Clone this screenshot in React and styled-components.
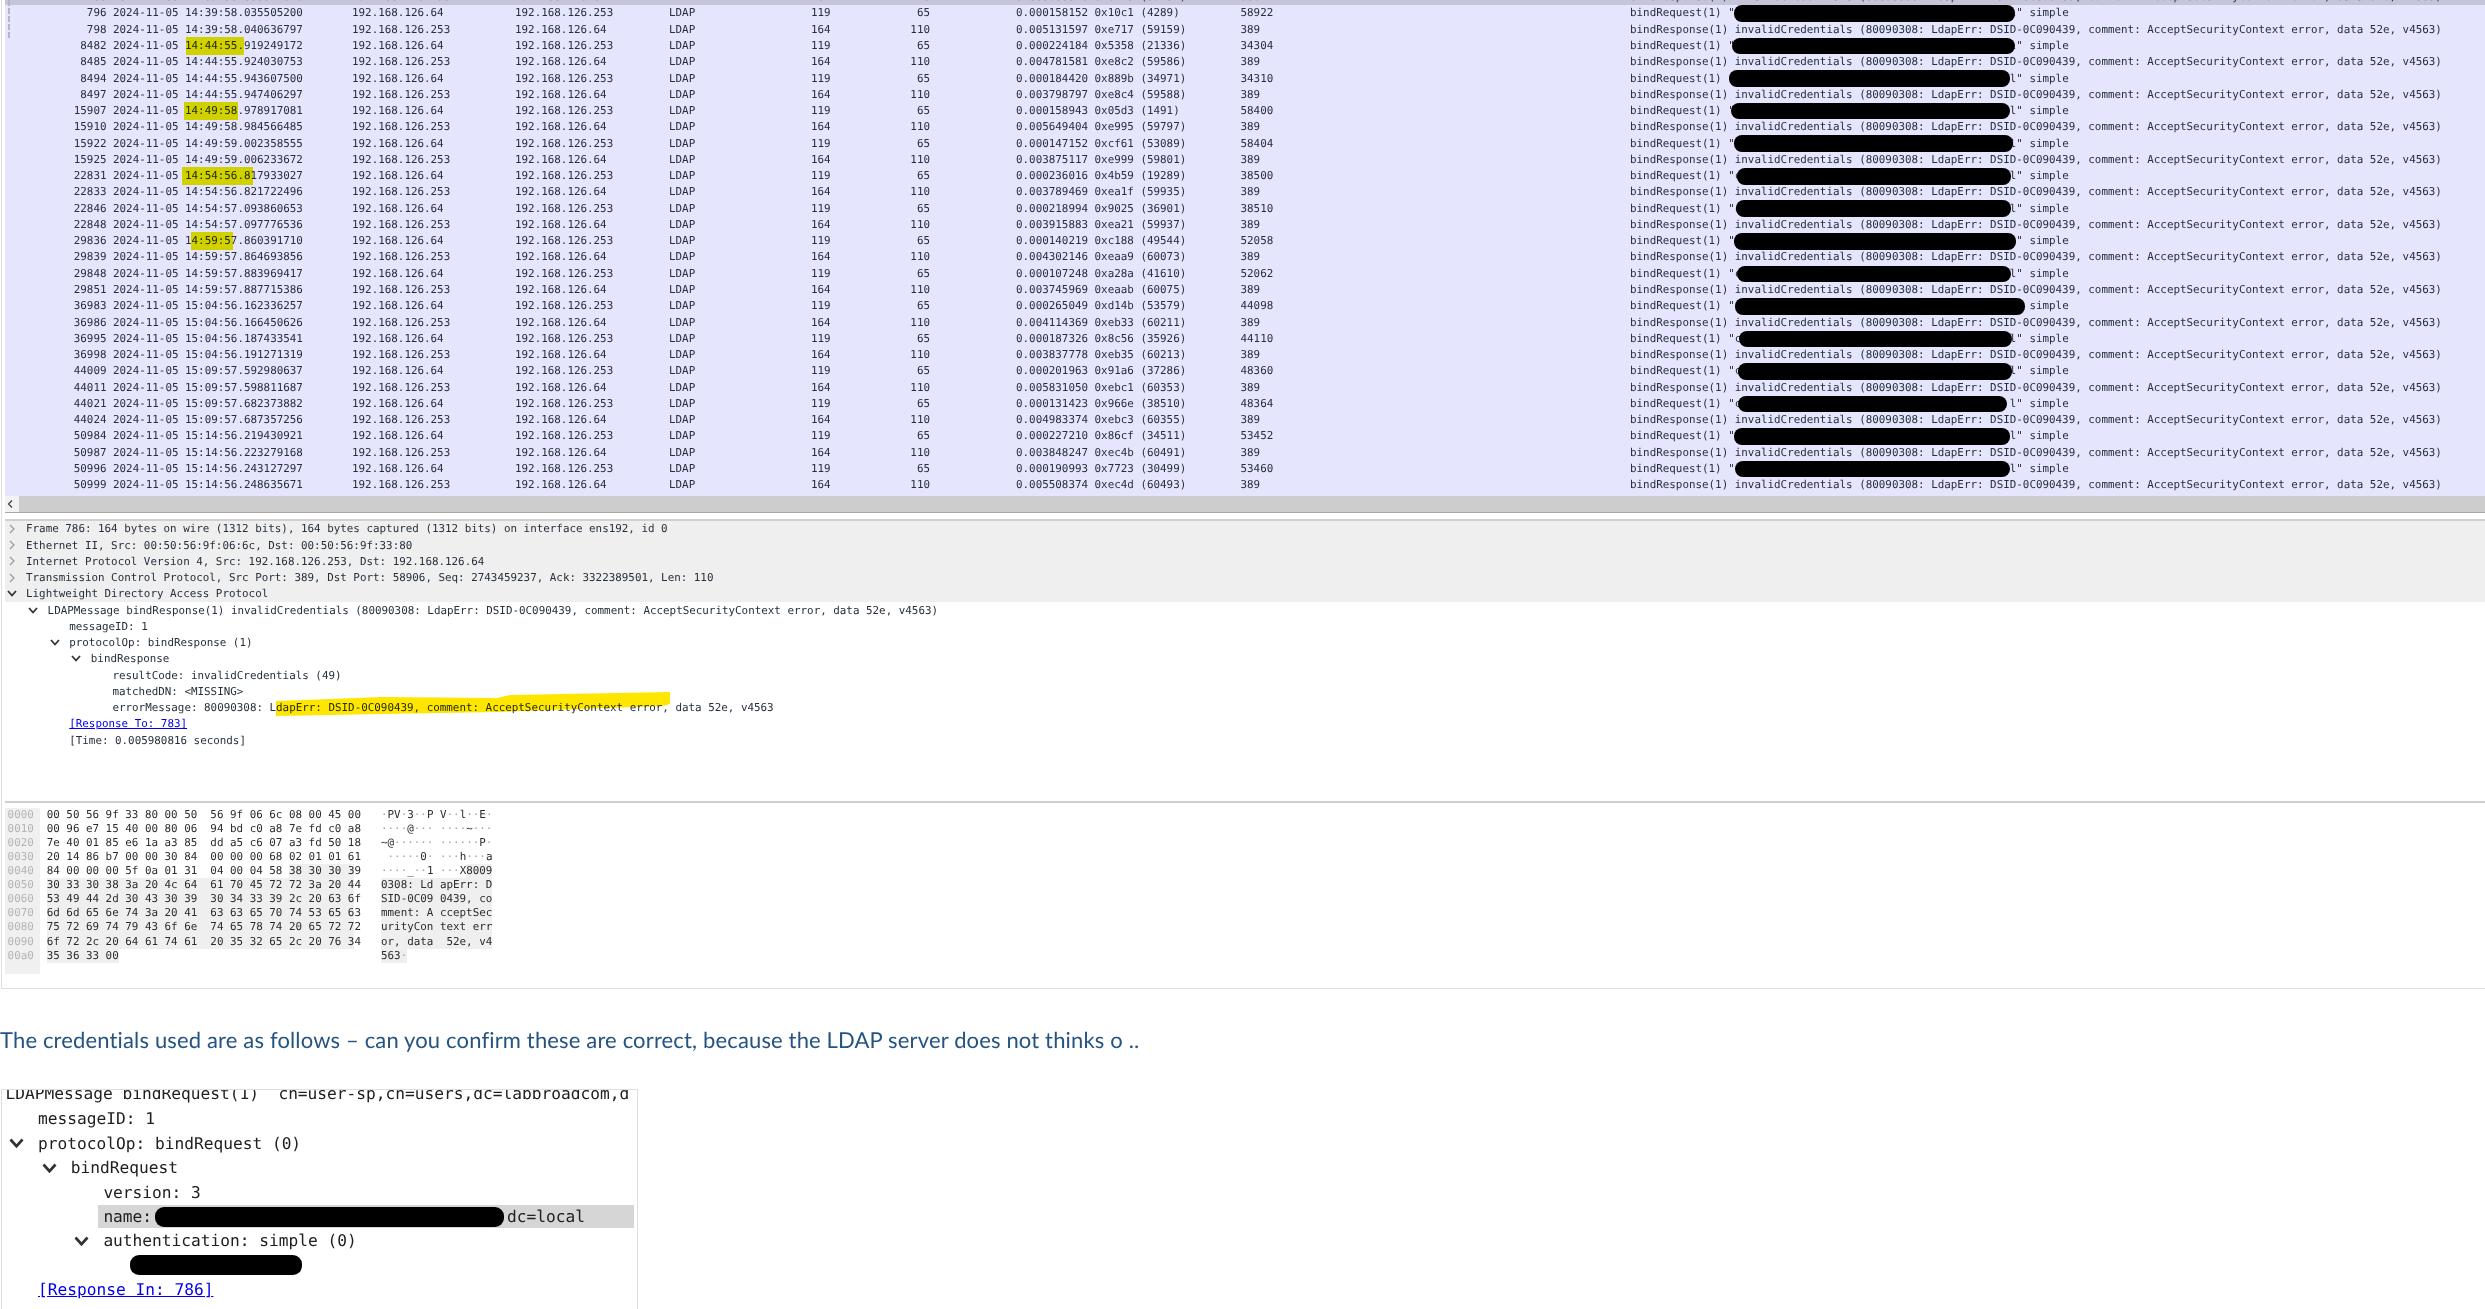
import React from "react";
import styled, { createGlobalStyle } from "styled-components";

const Global = createGlobalStyle`
  html, body { margin: 0; padding: 0; background: #fff; overflow: hidden; }
  * { box-sizing: border-box; }
`;

const ROW = 16.28;

const Page = styled.div`
  width: 2485px;
  height: 1309px;
  overflow: hidden;
  display: flex;
  flex-direction: column;
  font-family: "DejaVu Sans Mono", "Liberation Mono", monospace;
  font-size: 10.88px;
  text-rendering: geometricPrecision;
  color: #26303c;
`;
const Capture = styled.div`
  margin-left: 1px;
  padding-left: 3px;
  border-left: 1px solid #dedede;
  border-bottom: 1px solid #dedede;
  height: 989px;
  display: flex;
  flex-direction: column;
  flex: none;
`;
const PacketList = styled.div`
  position: relative;
  height: 496px;
  flex: none;
  overflow: hidden;
  background: #e5e5fd;
`;
const FlowLine = styled.div`
  position: absolute;
  left: 3px;
  top: 0;
  height: 40px;
  width: 2px;
  background: repeating-linear-gradient(#b4b4c8 0 6px, transparent 6px 8px);
`;
const PacketRow = styled.div`
  display: grid;
  grid-template-columns: 108px 239px 163px 154px 142px 39px 80px 86px 224.5px 389.5px 1fr;
  height: ${ROW}px;
  line-height: ${ROW}px;
  white-space: pre;
  background: ${(p) => (p.$selected ? "#c5c4d9" : "transparent")};
  margin-top: ${(p) => (p.$selected ? "-10.8px" : "0")};
`;
const Cell = styled.div`
  position: relative;
  text-align: ${(p) => (p.$right ? "right" : "left")};
  padding-right: ${(p) => (p.$pad ? p.$pad : 0)}px;
`;
const TimeMark = styled.i`
  position: absolute;
  top: -1px;
  height: 18px;
  background: #e9e900;
  mix-blend-mode: multiply;
`;
const Mask = styled.i`
  position: absolute;
  top: -0.2px;
  height: 16.6px;
  background: #000;
  border-radius: 8px;
`;
const MaskGap = styled.span`
  display: inline-block;
  width: 41ch;
`;
const ScrollBar = styled.div`
  height: 17px;
  flex: none;
  display: flex;
  border-bottom: 1px solid #a8a8a8;
`;
const ScrollArrow = styled.div`
  width: 14px;
  background: #f2f2f2;
  display: flex;
  align-items: center;
  padding-left: 2px;
`;
const ScrollTrack = styled.div`
  flex: 1;
  background: #cdcdcd;
`;
const TreePane = styled.div`
  margin-top: 5.7px;
  border-top: 2px solid #d0d0d0;
  height: 284.3px;
  flex: none;
  border-bottom: 2px solid #cfcfcf;
`;
const TreeRow = styled.div`
  position: relative;
  display: flex;
  align-items: center;
  height: 16.26px;
  white-space: pre;
  padding-left: ${(p) => p.$level * 21.6}px;
  background: ${(p) => (p.$shaded ? "#efefef" : "transparent")};
`;
const Slot = styled.span`
  width: 13px;
  margin-right: 8px;
  flex: none;
  display: flex;
  align-items: center;
  justify-content: center;
`;
const Link = styled.span`
  color: #0000ee;
  text-decoration: underline;
`;
const Scribble = styled.svg`
  position: absolute;
  left: 271px;
  top: -10px;
  mix-blend-mode: multiply;
`;
const HexPane = styled.div`
  padding-top: 4.6px;
  flex: 1;
  color: #2c2c2c;
`;
const HexRow = styled.div`
  display: flex;
  height: 14.12px;
  line-height: 14.12px;
  white-space: pre;
`;
const OffsetCell = styled.div`
  width: 35px;
  flex: none;
  padding-left: 2.6px;
  background: #f0f0f0;
  color: #b4b4b4;
  height: ${(p) => (p.$tail ? "25px" : "14.12px")};
`;
const HexCell = styled.div`
  width: 341px;
  flex: none;
  padding-left: 6.7px;
`;
const AsciiCell = styled.div`
  flex: 1;
`;
const Bytes = styled.span`
  display: inline-block;
  vertical-align: top;
  height: 14.12px;
  background: ${(p) => (p.$sel ? "#efefef" : "transparent")};
`;
const Dot = styled.span`
  color: #a0a0a0;
`;
const Note = styled.div`
  height: 100px;
  flex: none;
  display: flex;
  align-items: center;
  font-family: Lato, "Noto Sans", sans-serif;
  font-size: 22px;
  letter-spacing: 0.15px;
  color: #255482;
  white-space: pre;
`;
const Snippet = styled.div`
  margin-left: 1px;
  width: 637px;
  flex: 1;
  border: 1px solid #dedede;
  border-bottom: none;
  overflow: hidden;
  padding-right: 3px;
  font-size: 16.2px;
  color: #202020;
`;
const SnipHead = styled.div`
  margin-top: -7.6px;
  height: 24.4px;
  line-height: 24.4px;
  padding-left: 3.5px;
  white-space: pre;
  overflow: hidden;
`;
const SnipRow = styled.div`
  display: flex;
  align-items: center;
  height: 24.4px;
  white-space: pre;
  padding-left: ${(p) => (p.$level - 1) * 32.7 + 3.3}px;
`;
const SnipSlot = styled.span`
  width: 22.4px;
  margin-right: 10.3px;
  flex: none;
  display: flex;
  align-items: center;
  justify-content: center;
`;
const NameBar = styled.div`
  flex: 1;
  display: flex;
  align-items: center;
  height: 23.7px;
  margin-left: -5.5px;
  padding-left: 5.5px;
  background: #d6d6d6;
`;
const Pill = styled.span`
  display: inline-block;
  height: 20px;
  width: ${(p) => p.$width}px;
  margin: 0 3px 0 ${(p) => p.$left}px;
  border-radius: 9px;
  background: #000;
`;

const Chevron = ({ open, size = 1 }) => (
  <svg width={10 * size} height={open ? 7 * size : 10 * size} viewBox={open ? "0 0 10 7" : "0 0 10 10"}>
    {open ? (
      <polyline points="1,1 5,5.5 9,1" fill="none" stroke="#333" strokeWidth="1.8" />
    ) : (
      <polyline points="3,1 7,5 3,9" fill="none" stroke="#9a9a9a" strokeWidth="1.2" />
    )}
  </svg>
);

const raw = `796|14:39:58.035505200|0.000158152 0x10c1 (4289)|58922
798|14:39:58.040636797|0.005131597 0xe717 (59159)|389
8482|14:44:55.919249172|0.000224184 0x5358 (21336)|34304
8485|14:44:55.924030753|0.004781581 0xe8c2 (59586)|389
8494|14:44:55.943607500|0.000184420 0x889b (34971)|34310
8497|14:44:55.947406297|0.003798797 0xe8c4 (59588)|389
15907|14:49:58.978917081|0.000158943 0x05d3 (1491)|58400
15910|14:49:58.984566485|0.005649404 0xe995 (59797)|389
15922|14:49:59.002358555|0.000147152 0xcf61 (53089)|58404
15925|14:49:59.006233672|0.003875117 0xe999 (59801)|389
22831|14:54:56.817933027|0.000236016 0x4b59 (19289)|38500
22833|14:54:56.821722496|0.003789469 0xea1f (59935)|389
22846|14:54:57.093860653|0.000218994 0x9025 (36901)|38510
22848|14:54:57.097776536|0.003915883 0xea21 (59937)|389
29836|14:59:57.860391710|0.000140219 0xc188 (49544)|52058
29839|14:59:57.864693856|0.004302146 0xeaa9 (60073)|389
29848|14:59:57.883969417|0.000107248 0xa28a (41610)|52062
29851|14:59:57.887715386|0.003745969 0xeaab (60075)|389
36983|15:04:56.162336257|0.000265049 0xd14b (53579)|44098
36986|15:04:56.166450626|0.004114369 0xeb33 (60211)|389
36995|15:04:56.187433541|0.000187326 0x8c56 (35926)|44110
36998|15:04:56.191271319|0.003837778 0xeb35 (60213)|389
44009|15:09:57.592980637|0.000201963 0x91a6 (37286)|48360
44011|15:09:57.598811687|0.005831050 0xebc1 (60353)|389
44021|15:09:57.682373882|0.000131423 0x966e (38510)|48364
44024|15:09:57.687357256|0.004983374 0xebc3 (60355)|389
50984|15:14:56.219430921|0.000227210 0x86cf (34511)|53452
50987|15:14:56.223279168|0.003848247 0xec4b (60491)|389
50996|15:14:56.243127297|0.000190993 0x7723 (30499)|53460
50999|15:14:56.248635671|0.005508374 0xec4d (60493)|389`;

const packets = raw.split("\n").map((l) => l.split("|"));

const RESPONSE =
  "bindResponse(1) invalidCredentials (80090308: LdapErr: DSID-0C090439, comment: AcceptSecurityContext error, data 52e, v4563)";

const masks = {
  0: [1734, 2015], 2: [1732, 2015], 4: [1729, 2010], 6: [1731, 2010], 8: [1734, 2013],
  10: [1737, 2011], 12: [1736, 2011], 14: [1734, 2016], 16: [1737, 2011], 18: [1735, 2025],
  20: [1739, 2012], 22: [1738, 2012], 24: [1738, 2007], 26: [1734, 2010], 28: [1735, 2010],
};
const marks = { 2: [186, 244], 6: [184, 238], 10: [182, 253], 14: [191, 233] };

const Packet = ({ no, time, delta, port, src, dst, len, pay, selected, mask, mark, info }) => (
  <PacketRow $selected={selected}>
    <Cell $right $pad={6.5}>{no}</Cell>
    <Cell>
      {`2024-11-05 ${time}`}
      {mark && <TimeMark style={{ left: mark[0] - 113, width: mark[1] - mark[0] }} />}
    </Cell>
    <Cell>{src}</Cell>
    <Cell>{dst}</Cell>
    <Cell>LDAP</Cell>
    <Cell>{len}</Cell>
    <Cell $right>{pay}</Cell>
    <Cell />
    <Cell>{delta}</Cell>
    <Cell>{port}</Cell>
    <Cell>
      {mask ? (
        <>
          {'bindRequest(1) "c'}
          <MaskGap />
          {'l" simple'}
          <Mask style={{ left: mask[0] - 1630, width: mask[1] - mask[0] }} />
        </>
      ) : (
        info
      )}
    </Cell>
  </PacketRow>
);

const hexData = [
  ["0000", "00 50 56 9f 33 80 00 50  56 9f 06 6c 08 00 45 00", "·PV·3··P V··l··E·"],
  ["0010", "00 96 e7 15 40 00 80 06  94 bd c0 a8 7e fd c0 a8", "····@··· ····~···"],
  ["0020", "7e 40 01 85 e6 1a a3 85  dd a5 c6 07 a3 fd 50 18", "~@······ ······P·"],
  ["0030", "20 14 86 b7 00 00 30 84  00 00 00 68 02 01 01 61", " ·····0· ···h···a"],
  ["0040", "84 00 00 00 5f 0a 01 31  04 00 04 58 38 30 30 39", "····_··1 ···X8009", 37, 47, 13, 17],
  ["0050", "30 33 30 38 3a 20 4c 64  61 70 45 72 72 3a 20 44", "0308: Ld apErr: D", 0, 47, 0, 17],
  ["0060", "53 49 44 2d 30 43 30 39  30 34 33 39 2c 20 63 6f", "SID-0C09 0439, co", 0, 47, 0, 17],
  ["0070", "6d 6d 65 6e 74 3a 20 41  63 63 65 70 74 53 65 63", "mment: A cceptSec", 0, 47, 0, 17],
  ["0080", "75 72 69 74 79 43 6f 6e  74 65 78 74 20 65 72 72", "urityCon text err", 0, 47, 0, 17],
  ["0090", "6f 72 2c 20 64 61 74 61  20 35 32 65 2c 20 76 34", "or, data  52e, v4", 0, 47, 0, 17],
  ["00a0", "35 36 33 00", "563·", 0, 11, 0, 4],
];

const dotted = (s) =>
  s.split(/(·+)/).map((part, i) => (part.startsWith("·") ? <Dot key={i}>{part}</Dot> : part));

const Sliced = ({ text, from = 0, to = 0 }) => (
  <>
    <Bytes>{dotted(text.slice(0, from))}</Bytes>
    <Bytes $sel>{dotted(text.slice(from, to))}</Bytes>
    <Bytes>{dotted(text.slice(to))}</Bytes>
  </>
);

const Tree = ({ level = 0, shaded, chevron, children }) => (
  <TreeRow $level={level} $shaded={shaded}>
    <Slot>{chevron && <Chevron open={chevron === "open"} />}</Slot>
    {children}
  </TreeRow>
);

export default function App() {
  return (
    <Page>
      <Global />
      <Capture>
        <PacketList>
          <Packet selected no="786" time="14:39:58.035347048" src="192.168.126.253" dst="192.168.126.64" len="164" pay="110" delta="0.005980816 0xe715 (59157)" port="389" info={RESPONSE} />
          {packets.map(([no, time, delta, port], i) => (
            <Packet
              key={no}
              no={no}
              time={time}
              delta={delta}
              port={port}
              src={i % 2 ? "192.168.126.253" : "192.168.126.64"}
              dst={i % 2 ? "192.168.126.64" : "192.168.126.253"}
              len={i % 2 ? "164" : "119"}
              pay={i % 2 ? "110" : "65"}
              mask={masks[i]}
              mark={marks[i]}
              info={RESPONSE}
            />
          ))}
          <FlowLine />
        </PacketList>
        <ScrollBar>
          <ScrollArrow>
            <svg width="6" height="8" viewBox="0 0 6 8">
              <polyline points="5,0.5 1.5,4 5,7.5" fill="none" stroke="#444" strokeWidth="1.3" />
            </svg>
          </ScrollArrow>
          <ScrollTrack />
        </ScrollBar>
        <TreePane>
          <Tree shaded chevron="closed">Frame 786: 164 bytes on wire (1312 bits), 164 bytes captured (1312 bits) on interface ens192, id 0</Tree>
          <Tree shaded chevron="closed">Ethernet II, Src: 00:50:56:9f:06:6c, Dst: 00:50:56:9f:33:80</Tree>
          <Tree shaded chevron="closed">Internet Protocol Version 4, Src: 192.168.126.253, Dst: 192.168.126.64</Tree>
          <Tree shaded chevron="closed">Transmission Control Protocol, Src Port: 389, Dst Port: 58906, Seq: 2743459237, Ack: 3322389501, Len: 110</Tree>
          <Tree shaded chevron="open">Lightweight Directory Access Protocol</Tree>
          <Tree level={1} chevron="open">LDAPMessage bindResponse(1) invalidCredentials (80090308: LdapErr: DSID-0C090439, comment: AcceptSecurityContext error, data 52e, v4563)</Tree>
          <Tree level={2}>messageID: 1</Tree>
          <Tree level={2} chevron="open">protocolOp: bindResponse (1)</Tree>
          <Tree level={3} chevron="open">bindResponse</Tree>
          <Tree level={4}>resultCode: invalidCredentials (49)</Tree>
          <Tree level={4}>matchedDN: &lt;MISSING&gt;</Tree>
          <Tree level={4}>
            errorMessage: 80090308: LdapErr: DSID-0C090439, comment: AcceptSecurityContext error, data 52e, v4563
            <Scribble width="396" height="30" viewBox="0 0 396 30">
              <path d="M0 12 L106 8 L221 9 L234 6 L394 3 L394 15 L387 17 L221 23 L106 25 L0 27Z" fill="#ffe600" />
            </Scribble>
          </Tree>
          <Tree level={2}><Link>[Response To: 783]</Link></Tree>
          <Tree level={2}>[Time: 0.005980816 seconds]</Tree>
        </TreePane>
        <HexPane>
          {hexData.map(([off, hex, ascii, a, b, c, d], i) => (
            <HexRow key={off}>
              <OffsetCell $tail={i === hexData.length - 1}>{off}</OffsetCell>
              <HexCell><Sliced text={hex} from={a} to={b} /></HexCell>
              <AsciiCell><Sliced text={ascii} from={c} to={d} /></AsciiCell>
            </HexRow>
          ))}
        </HexPane>
      </Capture>
      <Note>The credentials used are as follows – can you confirm these are correct, because the LDAP server does not thinks o ..</Note>
      <Snippet>
        <SnipHead>LDAPMessage bindRequest(1)  cn=user-sp,cn=users,dc=labbroadcom,d</SnipHead>
        <SnipRow $level={1}><SnipSlot />messageID: 1</SnipRow>
        <SnipRow $level={1}><SnipSlot><Chevron open size={1.5} /></SnipSlot>protocolOp: bindRequest (0)</SnipRow>
        <SnipRow $level={2}><SnipSlot><Chevron open size={1.5} /></SnipSlot>bindRequest</SnipRow>
        <SnipRow $level={3}><SnipSlot />version: 3</SnipRow>
        <SnipRow $level={3}>
          <SnipSlot />
          <NameBar>name:<Pill $width={349} $left={3} />dc=local</NameBar>
        </SnipRow>
        <SnipRow $level={3}><SnipSlot><Chevron open size={1.5} /></SnipSlot>authentication: simple (0)</SnipRow>
        <SnipRow $level={3}><SnipSlot /><Pill $width={172} $left={26.6} /></SnipRow>
        <SnipRow $level={1}><SnipSlot /><Link>[Response In: 786]</Link></SnipRow>
      </Snippet>
    </Page>
  );
}
